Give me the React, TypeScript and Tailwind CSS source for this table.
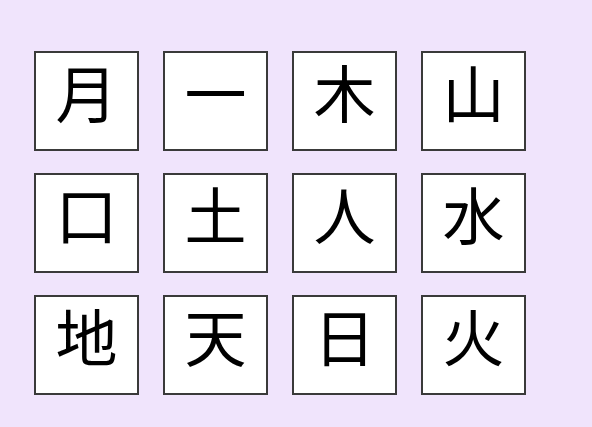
const kanji = ["月", "一", "木", "山", "口", "土", "人", "水", "地", "天", "日", "火"];

export default function App() {
  return (
    <div className="min-h-[427px] w-full bg-[#f0e4fc] pl-[34px] pt-[51px]">
      <div className="grid w-fit grid-cols-[repeat(4,105px)] gap-x-[24px] gap-y-[22px]">
        {kanji.map((k) => (
          <div
            key={k}
            className="flex h-[100px] items-center justify-center border-2 border-[#3a3a3a] bg-white pb-[20px] text-[62px] leading-none text-black"
            style={{ fontFamily: '"Noto Sans CJK JP", "Noto Sans", sans-serif' }}
          >
            {k}
          </div>
        ))}
      </div>
    </div>
  );
}
